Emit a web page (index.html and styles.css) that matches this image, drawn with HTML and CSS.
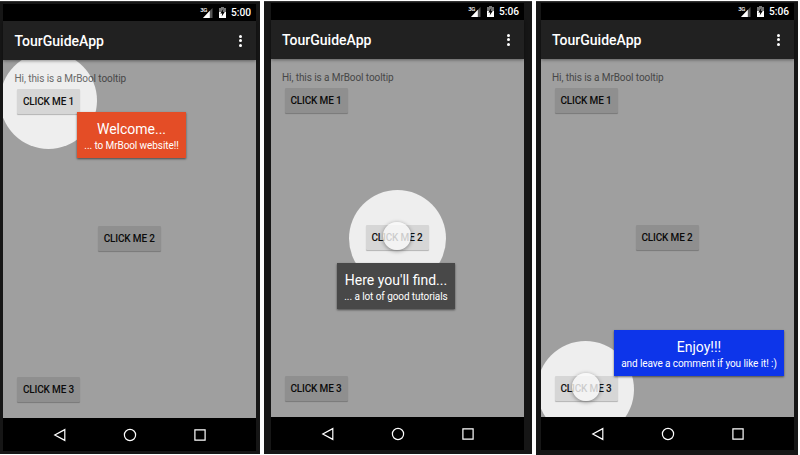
FILE: index.html
```
<!DOCTYPE html>
<html lang="en">
<head>
<meta charset="utf-8">
<title>TourGuideApp</title>
<link rel="stylesheet" href="styles.css">
</head>
<body>
<svg width="0" height="0" class="defs">
  <symbol id="signal" viewBox="0 0 10 10">
    <path d="M9.5 0V10H0Z" fill="#555"/>
    <path d="M6.8 2.8V10H0Z" fill="#fff"/>
  </symbol>
  <symbol id="battery" viewBox="0 0 7 11">
    <path d="M2 0H5V1H7V5H0V1H2Z" fill="#777"/>
    <path d="M0 5H7V11H0Z" fill="#fff"/>
    <path d="M4.3 2L1.3 6.4H3.2L2.7 9.4L5.7 5H3.8Z" fill="#000"/>
  </symbol>
  <symbol id="back" viewBox="0 0 14 14"><path d="M11.8 1.6V12.4L1.8 7Z"/></symbol>
  <symbol id="home" viewBox="0 0 14 14"><circle cx="7" cy="7" r="5.6"/></symbol>
  <symbol id="recent" viewBox="0 0 14 14"><path d="M1.9 1.9H12.1V12.1H1.9Z"/></symbol>
</svg>
<main class="phones">
  <section class="phone first">
    <div class="status"><span class="net">3G</span><svg class="signal"><use href="#signal"/></svg><svg class="battery"><use href="#battery"/></svg><span class="time">5:00</span></div>
    <header class="appbar"><h1>TourGuideApp</h1><span class="more"><i></i><i></i><i></i></span></header>
    <div class="content">
      <p>Hi, this is a MrBool tooltip</p>
      <button>CLICK ME 1</button><button class="middle">CLICK ME 2</button><button class="bottom">CLICK ME 3</button>
      <div class="spot"></div>
      <div class="tip welcome"><strong>Welcome...</strong><span>... to MrBool website!!</span></div>
    </div>
    <nav><svg><use href="#back"/></svg><svg><use href="#home"/></svg><svg><use href="#recent"/></svg></nav>
  </section>
  <section class="phone second">
    <div class="status"><span class="net">3G</span><svg class="signal"><use href="#signal"/></svg><svg class="battery"><use href="#battery"/></svg><span class="time">5:06</span></div>
    <header class="appbar"><h1>TourGuideApp</h1><span class="more"><i></i><i></i><i></i></span></header>
    <div class="content">
      <p>Hi, this is a MrBool tooltip</p>
      <button>CLICK ME 1</button><button class="middle">CLICK ME 2</button><button class="bottom">CLICK ME 3</button>
      <div class="spot"><i class="pointer"></i></div>
      <div class="tip tutorials"><strong>Here you'll find...</strong><span>... a lot of good tutorials</span></div>
    </div>
    <nav><svg><use href="#back"/></svg><svg><use href="#home"/></svg><svg><use href="#recent"/></svg></nav>
  </section>
  <section class="phone third">
    <div class="status"><span class="net">3G</span><svg class="signal"><use href="#signal"/></svg><svg class="battery"><use href="#battery"/></svg><span class="time">5:06</span></div>
    <header class="appbar"><h1>TourGuideApp</h1><span class="more"><i></i><i></i><i></i></span></header>
    <div class="content">
      <p>Hi, this is a MrBool tooltip</p>
      <button>CLICK ME 1</button><button class="middle">CLICK ME 2</button><button class="bottom">CLICK ME 3</button>
      <div class="spot"><i class="pointer"></i></div>
      <div class="tip enjoy"><strong>Enjoy!!!</strong><span>and leave a comment if you like it! :)</span></div>
    </div>
    <nav><svg><use href="#back"/></svg><svg><use href="#home"/></svg><svg><use href="#recent"/></svg></nav>
  </section>
</main>
</body>
</html>
```
FILE: styles.css
```
* { box-sizing: border-box; }
body { margin: 0; background: #fff; font-family: Roboto, sans-serif; overflow: hidden; }
.defs { position: absolute; }
.phones { display: flex; gap: 4px; height: 455px; padding-top: 1px; }
.phone { display: flex; flex-direction: column; height: 453px; padding: 2px 4px 0 3px; background: #161616; border-top: 1px solid #333; }
.first { width: 260px; }
.second { width: 268px; padding: 1px 8px 0 7px; }
.third { width: 262px; height: 454px; padding: 1px 4px 0 5px; }
.phone > * { width: 253px; flex: none; }
.status { display: flex; align-items: center; height: 17px; padding-right: 6px; justify-content: flex-end; background: #000; color: #fff; }
.net { font-size: 6px; line-height: 6px; font-weight: 500; letter-spacing: -.4px; align-self: flex-start; margin: 3px -4px 0 0; }
.signal { width: 10px; height: 10px; margin-right: 6px; }
.battery { width: 7px; height: 11px; margin-right: 5px; }
.time { font-size: 10.2px; line-height: 17px; font-weight: 500; width: 19px; white-space: nowrap; }
.appbar { display: flex; align-items: center; justify-content: space-between; height: 39px; padding: 0 14px 0 11.5px; background: #212121; position: relative; z-index: 2; box-shadow: 0 1px 3px rgba(0,0,0,.4); }
.second .appbar, .third .appbar { padding-left: 11px; }
h1 { margin: 0; font-size: 14px; line-height: 18px; font-weight: 500; color: #fff; }
.more { display: flex; flex-direction: column; gap: 1.5px; }
.more i { width: 3px; height: 3px; border-radius: 50%; background: #fff; }
.content { display: flex; flex-direction: column; align-items: flex-start; height: 358px; padding: 12px 12px 16px 11.5px; background: #eee; position: relative; overflow: hidden; }
.second .content, .third .content { padding-left: 11px; }
p { margin: 0 0 3.5px; font-size: 10px; letter-spacing: -.08px; line-height: 13px; color: #6a6a6a; white-space: nowrap; }
button { width: 63px; height: 25px; margin: 0 0 0 2.5px; padding: 0; border: 0; border-radius: 1px; background: #d6d6d6; box-shadow: 0 1px 1px rgba(0,0,0,.25); color: #111; font: 500 10px/25px Roboto, sans-serif; letter-spacing: -.15px; white-space: nowrap; }
.middle { margin: 112px 0 0; align-self: center; }
.bottom { margin-top: auto; }
.spot { position: absolute; width: 97px; height: 97px; border-radius: 50%; box-shadow: 0 0 0 500px rgba(0,0,0,.33); }
.first .spot { left: -3px; top: -8px; }
.second .spot { left: 77.5px; top: 131px; }
.third .spot { left: -4px; top: 282px; }
.pointer { position: absolute; left: 34.5px; top: 32px; width: 28px; height: 28px; border-radius: 50%; background: rgba(250,250,250,.8); box-shadow: 0 1px 4px rgba(0,0,0,.4); }
.tip { position: absolute; display: flex; flex-direction: column; align-items: center; height: 46px; padding-top: 9px; color: #fff; white-space: nowrap; box-shadow: 0 1px 2px rgba(0,0,0,.55); }
.tip strong { font-size: 14px; line-height: 17px; font-weight: 400; }
.tip span { font-size: 10px; letter-spacing: -.08px; line-height: 15px; }
.welcome { left: 74px; top: 52px; width: 109px; background: #e44d26; }
.tutorials { left: 66px; top: 204px; width: 118px; background: #484848; }
.enjoy { left: 73px; top: 271px; width: 170px; background: #0d35ea; }
nav { display: flex; justify-content: center; align-items: center; gap: 56px; height: 33px; background: #000; }
nav svg { width: 14px; height: 14px; fill: none; stroke: #fff; stroke-width: 1.2; }
```
